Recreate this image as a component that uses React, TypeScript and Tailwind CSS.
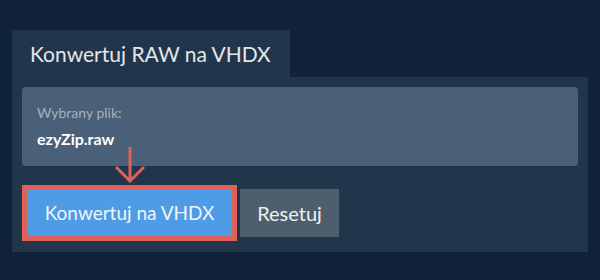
export default function App() {
  return (
    <div className="w-[600px] h-[280px] bg-[#11233a] pt-[30px] px-[12px] font-['Lato',sans-serif]">
      {/* Tab header */}
      <div className="w-[278px] h-[47px] bg-[#22364b] pl-[18px] flex items-center">
        <span className="text-[21px] text-[#e3e7ec] leading-none">Konwertuj RAW na VHDX</span>
      </div>

      {/* Panel */}
      <div className="bg-[#22364b] h-[175px] p-[10px]">
        <div className="h-[79px] bg-[#4a5f78] rounded-[4px] pl-[15px] pt-[17px]">
          <div className="text-[14px] text-[#a7b1bd] leading-[18px]">Wybrany plik:</div>
          <div className="text-[16px] font-bold text-white leading-[20px] mt-[7px]">ezyZip.raw</div>
        </div>

        <div className="relative flex items-start mt-[19px] gap-[3px]">
          <svg
            className="absolute left-[93px] top-[-38px]"
            width="30"
            height="36"
            viewBox="0 0 30 36"
            fill="none"
          >
            <path d="M15 0 V34 M1 20 L15 34 L29 20" stroke="#e0605a" strokeWidth="3" />
          </svg>
          <button className="w-[215px] h-[56px] border-[5px] border-[#e0605a] bg-[#4e9be6] text-[19px] text-[#f1f5f9] flex items-center justify-center">
            Konwertuj na VHDX
          </button>
          <button className="mt-[4px] w-[99px] h-[48px] bg-[#4f5e6d] text-[20px] text-[#eef1f4] flex items-center justify-center">
            Resetuj
          </button>
        </div>
      </div>
    </div>
  );
}
